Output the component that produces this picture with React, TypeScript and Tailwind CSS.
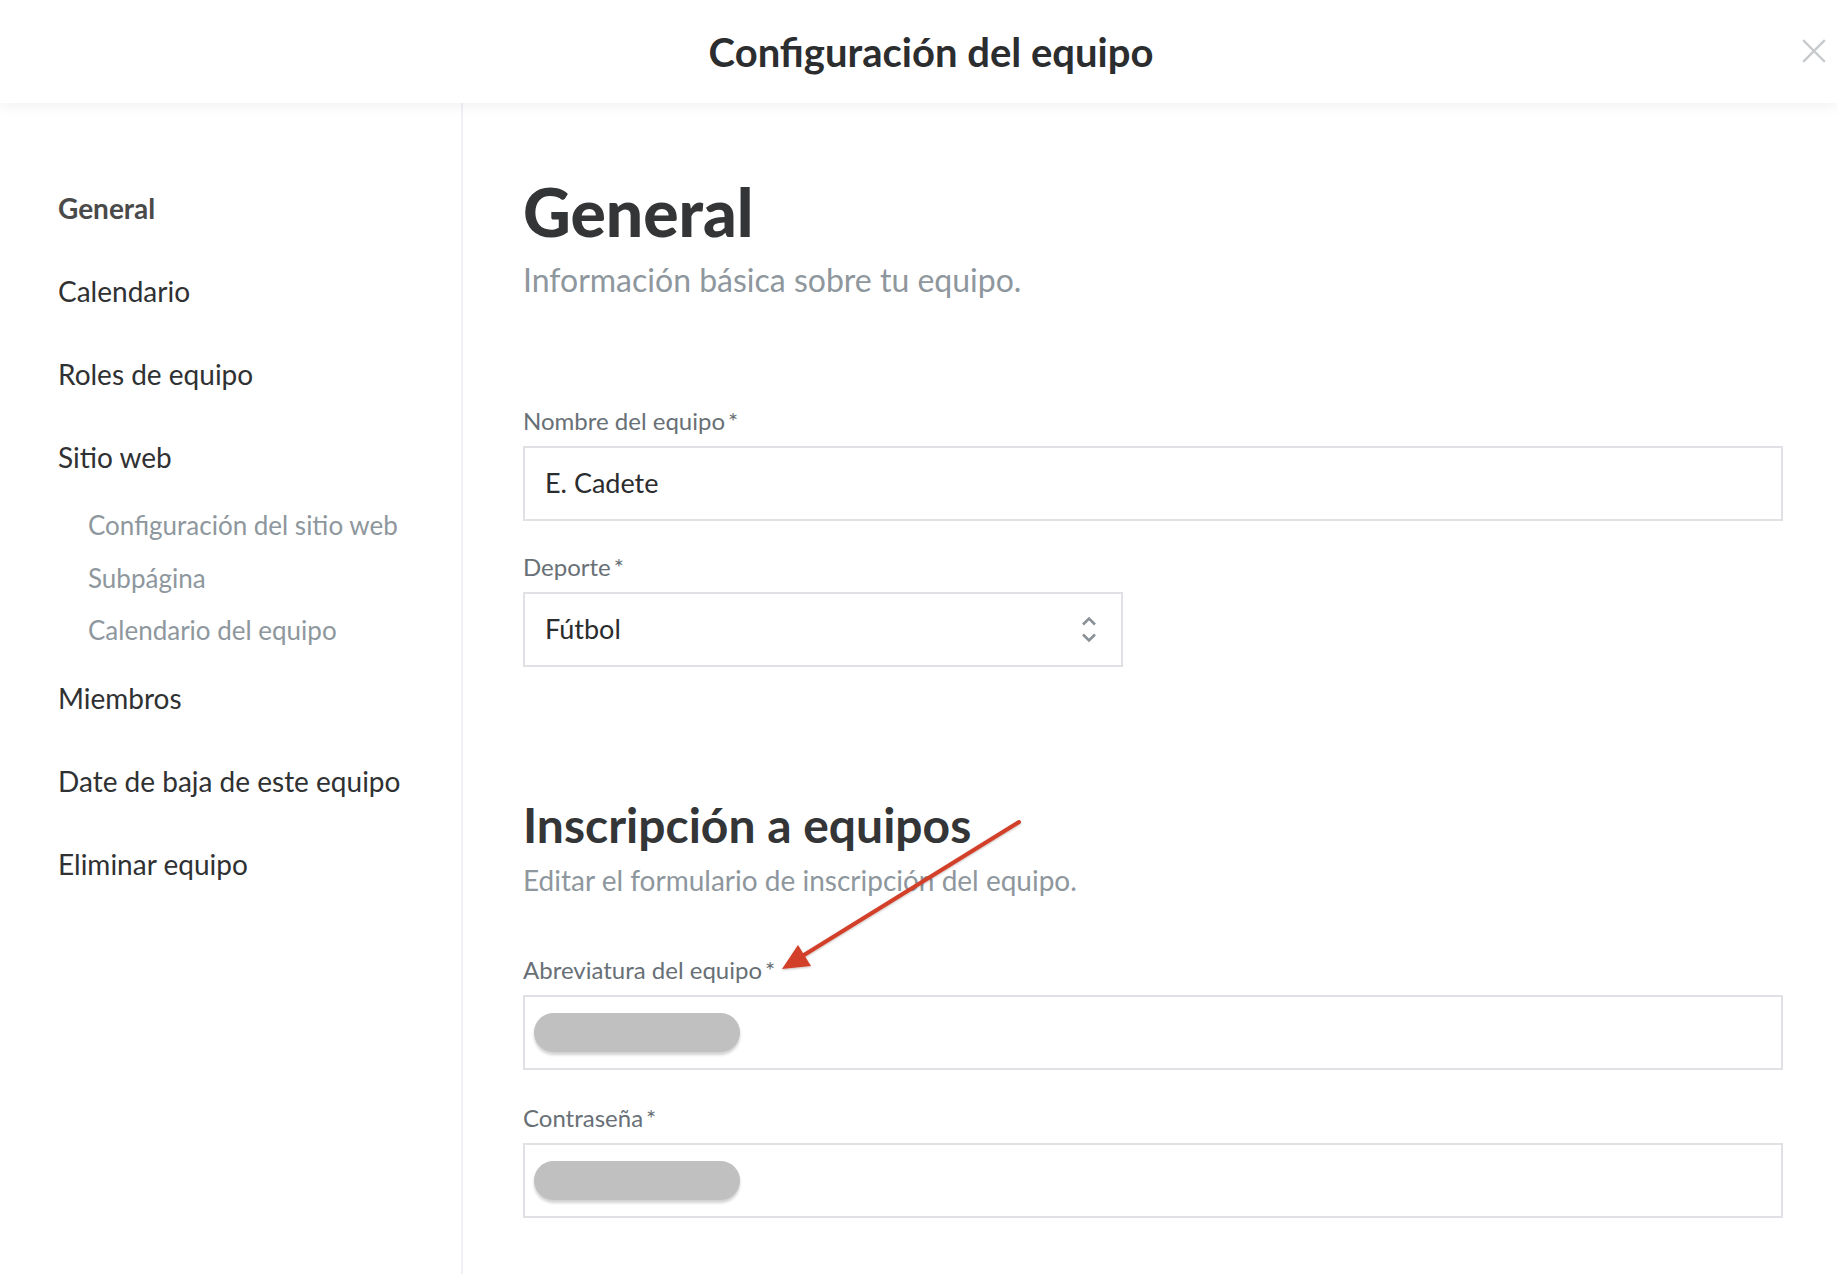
import React from "react";

const font = { fontFamily: "Lato, 'Noto Sans', sans-serif" };

function NavItem({ label, active }: { label: string; active?: boolean }) {
  return (
    <div
      className={
        "text-[28px] leading-[83px] " +
        (active ? "font-bold text-[#4a4a4a]" : "text-[#2f3133]")
      }
    >
      {label}
    </div>
  );
}

function SubItem({ label }: { label: string }) {
  return <div className="pl-[30px] text-[26px] leading-[52.5px] text-[#8e979d]">{label}</div>;
}

function Pill() {
  return <div className="h-[39px] w-[206px] rounded-full bg-[#c0c0c0] shadow-[0_3px_3px_rgba(0,0,0,0.18)]" />;
}

function Field({
  label,
  children,
  className,
  boxClass,
}: {
  label: string;
  children?: React.ReactNode;
  className?: string;
  boxClass?: string;
}) {
  return (
    <div className={className}>
      <div className="text-[24px] leading-[28px] text-[#687076]">
        {label}
        <span className="ml-[3px]">*</span>
      </div>
      <div
        className={
          "mt-[11px] flex h-[75px] items-center border-2 border-[#e0e1e5] bg-white " + (boxClass ?? "")
        }
      >
        {children}
      </div>
    </div>
  );
}

export default function App() {
  return (
    <div className="relative flex min-h-screen w-full flex-col bg-white" style={font}>
      <header className="relative z-10 flex h-[103px] shrink-0 items-center bg-white pl-[24px] shadow-[0_3px_14px_rgba(0,0,0,0.06)]">
        <div className="flex-1 text-center text-[40px] font-bold text-[#2b2d2f]">Configuración del equipo</div>
        <button className="absolute right-[12px] top-[39px] flex h-[24px] w-[24px] items-center justify-center">
          <svg width="24" height="24" viewBox="0 0 24 24">
            <path d="M2 2 L22 22 M22 2 L2 22" stroke="#c6cacd" strokeWidth="2.4" strokeLinecap="square" />
          </svg>
        </button>
      </header>

      <div className="flex flex-1">
        <aside className="w-[463px] shrink-0 border-r-2 border-[#f1f1f5] pl-[58px] pt-[64px]">
          <NavItem label="General" active />
          <NavItem label="Calendario" />
          <NavItem label="Roles de equipo" />
          <NavItem label="Sitio web" />
          <SubItem label="Configuración del sitio web" />
          <SubItem label="Subpágina" />
          <SubItem label="Calendario del equipo" />
          <NavItem label="Miembros" />
          <NavItem label="Date de baja de este equipo" />
          <NavItem label="Eliminar equipo" />
        </aside>

        <main className="flex-1 pl-[60px] pr-[55px] pt-[76px]">
          <h1 className="text-[66px] font-black leading-[66px] text-[#333537]">General</h1>
          <p className="mt-[17px] text-[32px] leading-[36px] text-[#8e979d]">Información básica sobre tu equipo.</p>

          <Field label="Nombre del equipo" className="mt-[109px]">
            <span className="pl-[20px] text-[27px] text-[#2a2c2e]">E. Cadete</span>
          </Field>

          <Field label="Deporte" className="mt-[32px] w-[600px]" boxClass="justify-between pr-[24px]">
            <span className="pl-[20px] text-[27px] text-[#2a2c2e]">Fútbol</span>
            <svg width="16" height="27" viewBox="0 0 16 27">
              <path d="M2 8.5 L8 2.5 L14 8.5" fill="none" stroke="#8a9196" strokeWidth="2.6" />
              <path d="M2 18.5 L8 24.5 L14 18.5" fill="none" stroke="#8a9196" strokeWidth="2.6" />
            </svg>
          </Field>

          <h2 className="mt-[134px] text-[48px] font-bold leading-[47px] text-[#333537]">Inscripción a equipos</h2>
          <p className="mt-[17px] text-[28px] leading-[30px] text-[#8e979d]">
            Editar el formulario de inscripción del equipo.
          </p>

          <Field label="Abreviatura del equipo" className="mt-[61px]" boxClass="pl-[9px]">
            <Pill />
          </Field>

          <Field label="Contraseña" className="mt-[34px]" boxClass="pl-[9px]">
            <Pill />
          </Field>
        </main>
      </div>

      <svg
        className="pointer-events-none absolute left-[770px] top-[815px]"
        width="260"
        height="165"
        viewBox="0 0 260 165"
      >
        <defs>
          <filter id="sh" x="-10%" y="-10%" width="120%" height="120%">
            <feDropShadow dx="0" dy="1" stdDeviation="1" floodColor="#000" floodOpacity="0.25" />
          </filter>
        </defs>
        <g filter="url(#sh)">
          <line x1="249" y1="7" x2="34" y2="140" stroke="#d2402a" strokeWidth="4" strokeLinecap="round" />
          <polygon points="12,154 41,151 28,130" fill="#d2402a" />
        </g>
      </svg>
    </div>
  );
}
